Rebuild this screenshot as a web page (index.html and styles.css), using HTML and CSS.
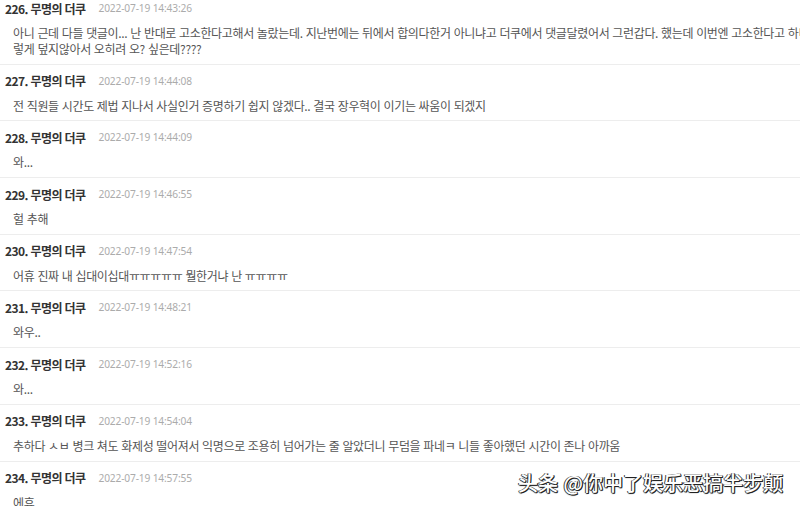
FILE: index.html
```
<!DOCTYPE html>
<html lang="ko">
<head>
<meta charset="utf-8">
<title>댓글</title>
<link rel="stylesheet" href="styles.css">
</head>
<body>
<div class="page">
  <ul class="comments">
    <li class="comment first">
      <div class="head"><span class="author">226. 무명의 더쿠</span><span class="date">2022-07-19 14:43:26</span></div>
      <div class="body"><p class="line">아니 근데 다들 댓글이... 난 반대로 고소한다고해서 놀랐는데. 지난번에는 뒤에서 합의다한거 아니냐고 더쿠에서 댓글달렸어서 그런갑다. 했는데 이번엔 고소한다고 하니 이</p><p class="line">렇게 덮지않아서 오히려 오? 싶은데????</p></div>
    </li>
    <li class="comment">
      <div class="head"><span class="author">227. 무명의 더쿠</span><span class="date">2022-07-19 14:44:08</span></div>
      <div class="body"><p class="line">전 직원들 시간도 제법 지나서 사실인거 증명하기 쉽지 않겠다.. 결국 장우혁이 이기는 싸움이 되겠지</p></div>
    </li>
    <li class="comment">
      <div class="head"><span class="author">228. 무명의 더쿠</span><span class="date">2022-07-19 14:44:09</span></div>
      <div class="body"><p class="line">와...</p></div>
    </li>
    <li class="comment">
      <div class="head"><span class="author">229. 무명의 더쿠</span><span class="date">2022-07-19 14:46:55</span></div>
      <div class="body"><p class="line">헐 추해</p></div>
    </li>
    <li class="comment">
      <div class="head"><span class="author">230. 무명의 더쿠</span><span class="date">2022-07-19 14:47:54</span></div>
      <div class="body"><p class="line">어휴 진짜 내 십대이십대ㅠㅠㅠㅠㅠ 뭘한거냐 난 ㅠㅠㅠㅠ</p></div>
    </li>
    <li class="comment">
      <div class="head"><span class="author">231. 무명의 더쿠</span><span class="date">2022-07-19 14:48:21</span></div>
      <div class="body"><p class="line">와우..</p></div>
    </li>
    <li class="comment">
      <div class="head"><span class="author">232. 무명의 더쿠</span><span class="date">2022-07-19 14:52:16</span></div>
      <div class="body"><p class="line">와...</p></div>
    </li>
    <li class="comment">
      <div class="head"><span class="author">233. 무명의 더쿠</span><span class="date">2022-07-19 14:54:04</span></div>
      <div class="body"><p class="line">추하다 ㅅㅂ 병크 쳐도 화제성 떨어져서 익명으로 조용히 넘어가는 줄 알았더니 무덤을 파네ㅋ 니들 좋아했던 시간이 존나 아까움</p></div>
    </li>
    <li class="comment">
      <div class="head"><span class="author">234. 무명의 더쿠</span><span class="date">2022-07-19 14:57:55</span></div>
      <div class="body"><p class="line">에휴.....</p></div>
    </li>
  </ul>
  <div class="watermark">头条 @你中了娱乐恶搞半步颠</div>
</div>
</body>
</html>
```
FILE: styles.css
```
html, body {
  margin: 0;
  padding: 0;
  background: #ffffff;
}
body {
  width: 800px;
  height: 506px;
  overflow: hidden;
  font-family: "Noto Sans CJK KR", "Noto Sans", sans-serif;
}
.page {
  position: relative;
  width: 800px;
  height: 506px;
  overflow: hidden;
}
.comments {
  list-style: none;
  margin: -8px 0 0 0;
  padding: 0;
}
.comment {
  padding: 7px 0 6.7px 0;
  border-bottom: 1px solid #ededed;
}
.head {
  display: flex;
  align-items: center;
  height: 18px;
  padding-left: 5px;
  gap: 13px;
}
.author {
  font-size: 12px;
  letter-spacing: -0.6px;
  font-weight: 700;
  color: #333333;
  white-space: nowrap;
}
.date {
  font-family: "Noto Sans", sans-serif;
  font-size: 10.2px;
  letter-spacing: -0.15px;
  color: #ababab;
  white-space: nowrap;
}
.body {
  margin-top: 8px;
  padding-left: 13px;
}
.line {
  margin: 0;
  font-size: 12px;
  letter-spacing: -0.35px;
  line-height: 16px;
  color: #555555;
  white-space: nowrap;
}
.watermark {
  position: absolute;
  left: 518px;
  top: 469px;
  font-family: "Noto Sans CJK SC", sans-serif;
  font-size: 20px;
  font-weight: 500;
  line-height: 28px;
  color: #ffffff;
  white-space: nowrap;
  text-shadow: 1px 1px 0 #222, -1px 0 0 #444, 0 1px 1px #333, 1px 0 0 #333;
}
```
